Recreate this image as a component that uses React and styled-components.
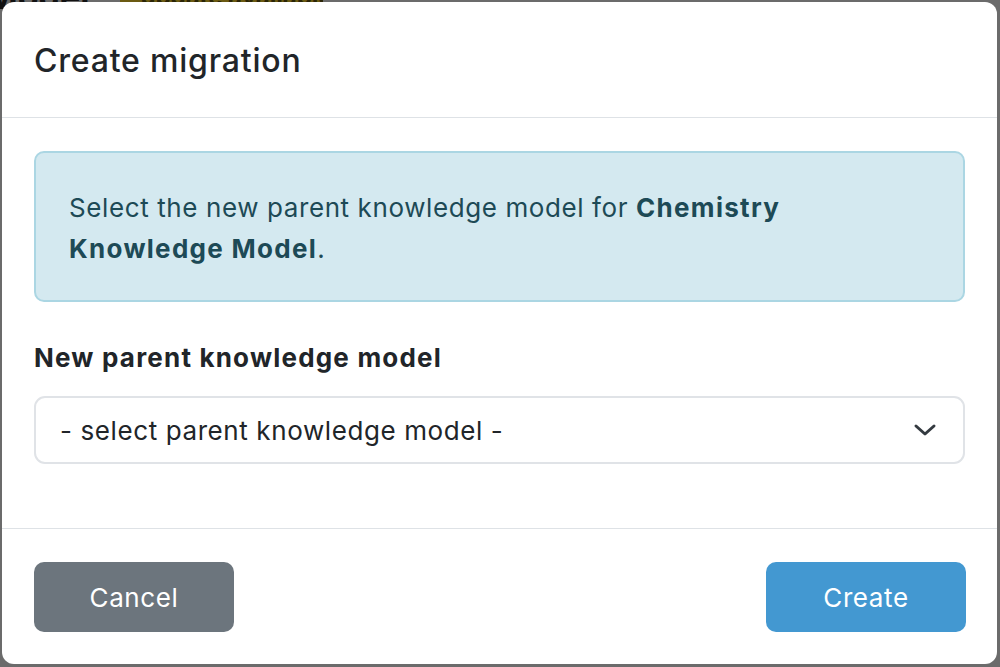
import React from "react";
import styled, { createGlobalStyle } from "styled-components";

const Global = createGlobalStyle`
  html, body { margin: 0; padding: 0; height: 100%; }
  body {
    font-family: Inter, "Noto Sans", "Liberation Sans", sans-serif;
    background: #6b6b6b;
    overflow: hidden;
  }
  #root { height: 100%; }
`;

const Page = styled.div`
  position: fixed;
  inset: 0;
  background: #6b6b6b;
  overflow: hidden;
`;

const PageHeading = styled.div`
  position: absolute;
  left: -14px;
  top: -24px;
  display: flex;
  align-items: center;
  gap: 31px;
  font-size: 34px;
  font-weight: 700;
  color: #111;
`;

const Badge = styled.span`
  display: inline-block;
  box-sizing: border-box;
  background: #6b5a12;
  color: #2a2406;
  font-size: 24px;
  padding: 2px 20px;
  width: 203px;
  white-space: nowrap;
  overflow: hidden;
`;

const Modal = styled.div`
  position: fixed;
  left: 2px;
  top: 2px;
  width: 995px;
  height: 662px;
  box-sizing: border-box;
  background: #fff;
  border-radius: 12px;
  display: flex;
  flex-direction: column;
  overflow: hidden;
`;

const Header = styled.div`
  height: 116px;
  box-sizing: border-box;
  padding: 0 32px;
  display: flex;
  align-items: center;
  border-bottom: 1px solid #dee2e6;
`;

const Title = styled.h5`
  margin: 0;
  margin-top: 2px;
  font-size: 32px;
  font-weight: 500;
  color: #212529;
  letter-spacing: 0.8px;
`;

const Body = styled.div`
  flex: 1;
  padding: 33px 32px 0;
  display: flex;
  flex-direction: column;
`;

const Alert = styled.div`
  box-sizing: border-box;
  height: 151px;
  padding: 34px 33px;
  background: #d4e9f0;
  border: 2px solid #abd6e3;
  border-radius: 10px;
  color: #1d4a56;
  font-size: 26px;
  line-height: 41px;
  letter-spacing: 0.6px;

  b { font-weight: 700; letter-spacing: 1.3px; }
`;

const Label = styled.label`
  display: block;
  margin-top: 38px;
  font-size: 26px;
  font-weight: 700;
  color: #212529;
  line-height: 36px;
  letter-spacing: 1.2px;
`;

const Select = styled.div`
  margin-top: 20px;
  height: 68px;
  box-sizing: border-box;
  border: 2px solid #e0e3e7;
  border-radius: 11px;
  padding: 0 26px 0 24px;
  display: flex;
  align-items: center;
  justify-content: space-between;
  font-size: 26px;
  color: #212529;
  letter-spacing: 0.6px;
`;

const Footer = styled.div`
  height: 136px;
  box-sizing: border-box;
  border-top: 1px solid #dee2e6;
  padding: 33px 31px 0 32px;
  display: flex;
  justify-content: space-between;
  align-items: flex-start;
`;

const Button = styled.button`
  width: 200px;
  height: 70px;
  border: none;
  border-radius: 10px;
  color: #fff;
  font-family: inherit;
  font-size: 26px;
  font-weight: 400;
  background: ${(p) => (p.$primary ? "#4398d1" : "#6c757d")};
  cursor: pointer;
  letter-spacing: 0.6px;
`;

function Chevron() {
  return (
    <svg width="24" height="16" viewBox="0 0 24 16" fill="none">
      <path d="M3 4l9 8 9-8" stroke="#343a40" strokeWidth="3" strokeLinecap="round" strokeLinejoin="round" />
    </svg>
  );
}

export default function App() {
  return (
    <>
      <Global />
      <Page>
        <PageHeading>
          <span>Model</span>
          <Badge>update available</Badge>
        </PageHeading>
      </Page>
      <Modal>
        <Header>
          <Title>Create migration</Title>
        </Header>
        <Body>
          <Alert>
            Select the new parent knowledge model for <b>Chemistry Knowledge Model</b>.
          </Alert>
          <Label>New parent knowledge model</Label>
          <Select>
            <span>- select parent knowledge model -</span>
            <Chevron />
          </Select>
        </Body>
        <Footer>
          <Button>Cancel</Button>
          <Button $primary>Create</Button>
        </Footer>
      </Modal>
    </>
  );
}
